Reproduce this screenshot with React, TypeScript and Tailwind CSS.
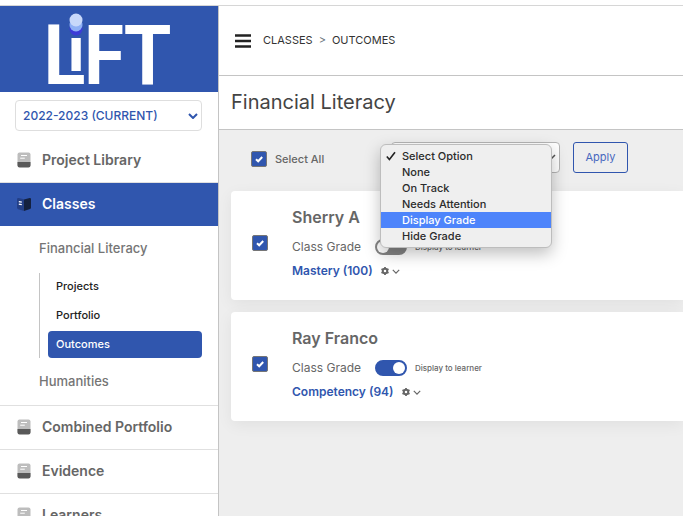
import { useState } from "react";

interface LearnerProps {
  id: number;
  name: string;
  grade: string;
  displayed: boolean;
}

const learners: LearnerProps[] = [
  { id: 1, name: "Sherry A", grade: "Mastery (100)", displayed: false },
  { id: 2, name: "Ray Franco", grade: "Competency (94)", displayed: true },
];

const options = [
  "Select Option",
  "None",
  "On Track",
  "Needs Attention",
  "Display Grade",
  "Hide Grade",
];

function Logo() {
  return (
    <svg
      viewBox="0 0 218 86"
      className="h-[86px] w-full overflow-visible"
      role="img"
      aria-label="LiFT"
      fill="#fff"
      fontFamily="'Noto Sans', sans-serif"
      fontWeight="600"
    >
      <text x="41" y="78" fontSize="83">L</text>
      <text x="67" y="65" fontSize="61" fontWeight="700">i</text>
      <text x="81" y="78" fontSize="83">F</text>
      <text x="124" y="78" fontSize="83">T</text>
      <circle cx="76" cy="23" r="6.5" fill="#3b3bd6" />
      <circle cx="76" cy="19" r="6.5" fill="#8fb0f5" />
      <circle cx="76" cy="14" r="6.5" fill="#c8d8fa" />
    </svg>
  );
}

function BookIcon() {
  return (
    <svg viewBox="0 0 14 16" className="h-4 w-[14px]" aria-hidden="true">
      <rect x="0.5" y="0.5" width="13" height="14" rx="2" fill="#bdbdbd" />
      <path d="M0.5 10h13v3.5a2 2 0 0 1-2 2h-9a2 2 0 0 1-2-2z" fill="#595959" />
      <path d="M4 3.5h6M3.2 6.2h4.6" stroke="#fff" strokeWidth="1" />
    </svg>
  );
}

function OpenBookIcon() {
  return (
    <svg viewBox="0 0 16 16" className="h-4 w-4" aria-hidden="true">
      <path d="M1 3.4Q1 1.8 2.6 2L8 3.2V15L2.2 13.2Q1 12.8 1 11.6z" fill="#233f87" />
      <path d="M8 3.6L13.6 2Q15 1.8 15 3.2V11.4Q15 12.6 14 13L8 15z" fill="#14213f" />
      <path d="M2.8 5.6l3 .5M2.8 8.2l3 .5" stroke="#fff" strokeWidth="1.2" />
    </svg>
  );
}

function Chevron({ className }: { className: string }) {
  return (
    <svg viewBox="0 0 10 6" className={className} fill="none" stroke="currentColor" aria-hidden="true">
      <path d="M1 1l4 4 4-4" />
    </svg>
  );
}

function GearIcon() {
  return (
    <svg viewBox="0 0 16 16" className="size-2" aria-hidden="true">
      <circle cx="8" cy="8" r="4.5" fill="none" stroke="#666" strokeWidth="4" />
      <path
        d="M8 0v3M8 13v3M1 4l2.6 1.5M12.4 10.5L15 12M1 12l2.6-1.5M12.4 5.5L15 4"
        stroke="#666"
        strokeWidth="3.5"
      />
    </svg>
  );
}

function CheckBox({ id, label }: { id: string; label?: string }) {
  return (
    <span className="relative block size-4 shrink-0">
      <input
        id={id}
        type="checkbox"
        defaultChecked
        aria-label={label}
        className="peer block size-4 appearance-none rounded-xs border border-[#767676] bg-white checked:bg-[#3056ae]"
      />
      <svg
        viewBox="0 0 16 16"
        className="pointer-events-none absolute inset-0 hidden size-4 peer-checked:block"
        fill="none"
        stroke="#fff"
        strokeWidth="2"
        aria-hidden="true"
      >
        <path d="M5 8.2l2.2 2.1L11.2 6" />
      </svg>
    </span>
  );
}

function NavItem({ text, active }: { text: string; active?: boolean }) {
  return (
    <a
      href="#"
      className={
        active
          ? "flex h-11 items-center gap-[10px] border-t border-[#e0e0e0] bg-[#3056ae] pb-px pl-4 text-sm font-semibold text-white"
          : "flex h-11 items-center gap-[11px] border-t border-[#e0e0e0] pb-px pl-[17px] text-sm font-semibold text-[#666]"
      }
    >
      {active ? <OpenBookIcon /> : <BookIcon />}
      <span>{text}</span>
    </a>
  );
}

function Sidebar() {
  return (
    <aside className="w-[219px] shrink-0 border-r border-[#c4c4c4] bg-white">
      <div className="bg-[#3056ae]">
        <Logo />
      </div>
      <div className="relative mt-2 mr-4 mb-2 ml-[15px]">
        <select
          aria-label="School year"
          className="block h-[31px] w-full appearance-none rounded border border-[#dedede] bg-white pl-[7px] text-xs font-medium text-[#3056ae]"
        >
          <option>2022-2023 (CURRENT)</option>
        </select>
        <Chevron className="pointer-events-none absolute top-[13px] right-1 h-[6px] w-[10px] stroke-2 text-[#3056ae]" />
      </div>
      <nav>
        <div className="-mt-px [&>a]:border-t-0">
          <NavItem text="Project Library" />
        </div>
        <NavItem text="Classes" active />
        <div className="pt-[14px] pr-4 pb-4 pl-[39px] text-[13px] font-medium text-[#757575]">
          <a href="#" className="block leading-4">Financial Literacy</a>
          <div className="mt-[17px] mb-[15px] flex flex-col gap-[3px] border-l border-[#c4c4c4] pl-2 text-[11px] text-[#222]">
            <a href="#" className="block rounded px-2 leading-[26px]">Projects</a>
            <a href="#" className="block rounded px-2 leading-[26px]">Portfolio</a>
            <a href="#" className="block rounded bg-[#3056ae] px-2 leading-[27px] text-white">Outcomes</a>
          </div>
          <a href="#" className="block leading-4">Humanities</a>
        </div>
        <NavItem text="Combined Portfolio" />
        <NavItem text="Evidence" />
        <NavItem text="Learners" />
      </nav>
    </aside>
  );
}

function LearnerCard({ learner }: { learner: LearnerProps }) {
  return (
    <article className="flex h-[109px] items-start rounded-l bg-white pl-[21px] shadow-[0_4px_16px_rgba(0,0,0,0.06)]">
      <div className="mt-11">
        <CheckBox id={`learner-${learner.id}`} label={`Select ${learner.name}`} />
      </div>
      <div className="ml-6 pt-4">
        <h2 className="text-base leading-5 font-semibold text-[#666]">{learner.name}</h2>
        <div className="mt-3 flex h-4 items-center">
          <span className="w-[83px] text-xs text-[#666]">Class Grade</span>
          <input
            id={`display-${learner.id}`}
            type="checkbox"
            role="switch"
            defaultChecked={learner.displayed}
            className="h-4 w-8 appearance-none rounded-full border-2 border-[#858585] bg-[#858585] before:block before:size-3 before:rounded-full before:bg-white checked:border-[#3056ae] checked:bg-[#3056ae] checked:before:translate-x-4"
          />
          <label htmlFor={`display-${learner.id}`} className="ml-2 text-[8px] font-medium text-[#666]">
            Display to learner
          </label>
        </div>
        <div className="mt-2 flex items-center gap-2">
          <span className="text-xs leading-4 font-semibold text-[#3056ae]">{learner.grade}</span>
          <button aria-label="Grade settings" className="flex items-center gap-[3px] text-[#666]">
            <GearIcon />
            <Chevron className="h-[5px] w-2 stroke-[1.5]" />
          </button>
        </div>
      </div>
    </article>
  );
}

function BulkActions() {
  const [selected, setSelected] = useState("Select Option");
  const [open, setOpen] = useState(true);

  return (
    <div className="flex h-[61px] items-center pb-[6px] pl-5">
      <div className="flex items-center pt-[3px]">
        <CheckBox id="select-all" />
        <label htmlFor="select-all" className="ml-2 w-[116px] text-[11px] font-medium text-[#666]">
          Select All
        </label>
      </div>
      <div className="relative">
        <select
          aria-label="Bulk action"
          value={selected}
          onChange={(e) => setSelected(e.target.value)}
          className="block h-[31px] w-[169px] appearance-none rounded-sm border border-[#b5b5b5] bg-white pl-2 text-[11px] text-transparent"
        >
          {options.map((option) => (
            <option key={option}>{option}</option>
          ))}
        </select>
        <Chevron className="pointer-events-none absolute top-3 right-1 h-[6px] w-[10px] stroke-[1.5] text-[#555]" />
        {open && (
          <div
            role="listbox"
            aria-label="Bulk action options"
            className="absolute top-[2px] -left-[11px] z-10 w-[172px] rounded-md border border-[#bdbdbd] bg-[#efefef] py-[3px] shadow-[0_6px_16px_rgba(0,0,0,0.25)]"
          >
            {options.map((option) => (
              <button
                key={option}
                role="option"
                aria-selected={option === selected}
                onClick={() => {
                  setSelected(option);
                  setOpen(false);
                }}
                className={
                  option === "Display Grade"
                    ? "flex h-4 w-full items-center bg-[#4d84fb] pl-[5px] text-[11px] font-medium text-white"
                    : "flex h-4 w-full items-center pl-[5px] text-[11px] font-medium text-[#2b2b2b]"
                }
              >
                <span className="w-4">
                  {option === selected && (
                    <svg viewBox="0 0 10 10" className="size-[10px]" fill="none" stroke="#222" strokeWidth="1.6" aria-hidden="true">
                      <path d="M0.8 5.6l2.6 3L9 1.2" />
                    </svg>
                  )}
                </span>
                {option}
              </button>
            ))}
          </div>
        )}
      </div>
      <button className="ml-[13px] h-[31px] w-[55px] rounded-[3px] border border-[#3056ae] text-[11px] text-[#4868bf]">
        Apply
      </button>
    </div>
  );
}

export default function App() {
  return (
    <div className="flex h-screen flex-col overflow-hidden bg-white pt-[5px] font-['Inter',sans-serif]">
      <div className="flex min-h-0 flex-1 border-t border-[#d6d6d6]">
        <Sidebar />
        <main className="min-w-0 flex-1 bg-[#eee]">
          <header className="flex h-[70px] items-center border-b border-[#c4c4c4] bg-white pl-4">
            <button aria-label="Toggle menu" className="mr-3">
              <svg viewBox="0 0 16 14" className="h-[14px] w-4" stroke="#222" strokeWidth="2.4" aria-hidden="true">
                <path d="M0 1.5h16M0 7h16M0 12.5h16" />
              </svg>
            </button>
            <nav aria-label="Breadcrumb" className="flex items-center gap-[6px] text-[11px] text-[#333]">
              <a href="#">CLASSES</a>
              <span className="text-[#6c757d]">&gt;</span>
              <a href="#">OUTCOMES</a>
            </nav>
          </header>
          <div className="flex h-[54px] items-center border-b border-[#c4c4c4] bg-white pb-[2px] pl-3">
            <h1 className="text-xl text-[#444]">Financial Literacy</h1>
          </div>
          <section className="pl-3">
            <BulkActions />
            <div className="flex flex-col gap-3">
              {learners.map((learner) => (
                <LearnerCard learner={learner} key={`learner-${learner.id}`} />
              ))}
            </div>
          </section>
        </main>
      </div>
    </div>
  );
}
